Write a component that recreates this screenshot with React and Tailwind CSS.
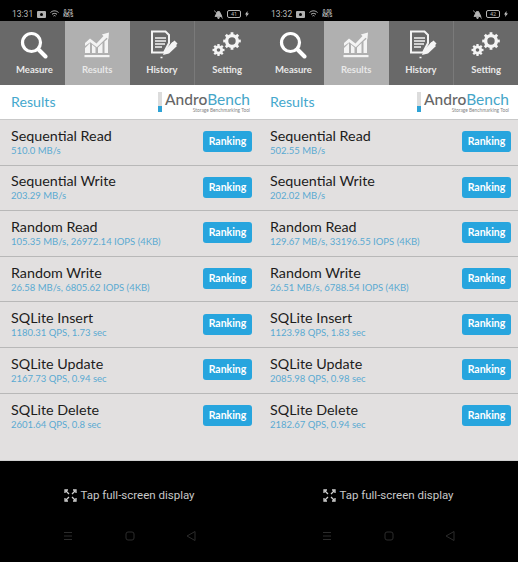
const font = { fontFamily: 'Lato, "Noto Sans", sans-serif' };

const Measure = () => (
  <svg width="28" height="28" viewBox="0 0 28 28" fill="none" stroke="white">
    <circle cx="11.500" cy="11.500" r="9" strokeWidth="3.200" />
    <path d="M18.500 18.500L25.500 25.500" strokeWidth="4" strokeLinecap="round" />
  </svg>
);
const ResultsIcon = () => (
  <svg width="26" height="27" viewBox="0 0 26 27" fill="#f4f4f4">
    <path d="M1 12l5-4.500 6.500 5L19.500 5l-1.700-1.500L25 1.500l-.6 7-1.800-1.700-9.800 9.500-6.500-5L1 15z" />
    <path d="M1 17l5-5v10H1zM8 13.500l3.500 3V22H8zM14 16.500l4.500-4.500V22H14zM20.500 10.500l3.500-3V22h-3.500z" />
    <rect x="0.500" y="24" width="25" height="2.200" />
  </svg>
);
const HistoryIcon = () => (
  <svg width="28" height="29" viewBox="0 0 28 29" fill="none">
    <path d="M2 1.500h13.500L19 5v8l-5 9.500H2z" stroke="#f4f4f4" strokeWidth="2" />
    <path d="M5 8h11M5 11h11M5 14h10M5 17h7" stroke="#f4f4f4" strokeWidth="1.500" />
    <path d="M13 25l2-5 7.500-8 4.500 4-8 7.500z" fill="#f4f4f4" />
    <path d="M21 13.500l3.500-3 3 3-2.500 3z" fill="#f4f4f4" />
    <path d="M10.500 27.500h2" stroke="#f4f4f4" strokeWidth="1.500" />
  </svg>
);
const gear = (cx, cy, r, sw, t, n) => {
  const teeth = [];
  for (let i = 0; i < n; i++) {
    const a = (i * 360) / n;
    teeth.push(<rect key={i} x={cx - t / 2} y={cy - r - sw / 2 - t * 0.6} width={t} height={t} fill="#f4f4f4" transform={`rotate(${a} ${cx} ${cy})`} />);
  }
  return (
    <g>
      <circle cx={cx} cy={cy} r={r} fill="none" stroke="#f4f4f4" strokeWidth={sw} />
      {teeth}
    </g>
  );
};
const GearIcon = () => (
  <svg width="30" height="25" viewBox="0 0 30 25">
    {gear(20, 9, 5.400, 3.400, 2.800, 8)}
    {gear(6.500, 18, 3.200, 2.800, 2.300, 8)}
  </svg>
);

const tabs = [
  { label: 'Measure', icon: <Measure />, cls: 'pl-[4px]' },
  { label: 'Results', icon: <ResultsIcon />, active: true },
  { label: 'History', icon: <HistoryIcon />, iconCls: 'pl-[5px]' },
  { label: 'Setting', icon: <GearIcon /> },
];

const FullScreen = () => (
  <svg width="13" height="13" viewBox="0 0 13 13" fill="none" stroke="#d0d0d0" strokeWidth="1.300">
    <path d="M1 4V1h3M9 1h3v3M12 9v3H9M4 12H1V9M2 2l3 3M11 2L8 5M11 11L8 8M2 11l3-3" />
  </svg>
);

function Panel({ time, speed, battery, results }) {
  return (
    <div className="w-[259px] h-[562px] flex flex-col bg-black" style={font}>
      <div className="h-[21px] flex items-center justify-between pl-[12px] pr-[10px] pt-[7px] text-[#b9b9b9]" style={{ fontFamily: 'Roboto, sans-serif' }}>
        <div className="flex items-center gap-[4px]">
          <span className="text-[8.500px] leading-none">{time}</span>
          <span className="w-[9px] h-[7px] bg-[#b0b0b0] rounded-[1px] flex items-center justify-center">
            <span className="w-[3px] h-[3px] rounded-full bg-black" />
          </span>
          <svg width="9" height="8" viewBox="0 0 9 8" fill="none" stroke="#c0c0c0" strokeWidth="1">
            <path d="M.5 2.500C3 .3 6 .3 8.500 2.500M2 4.300c1.500-1.200 3.500-1.200 5 0M3.500 6c.7-.6 1.300-.6 2 0" />
          </svg>
          <span className="text-[4.500px] leading-[4px] w-[10px] text-center font-bold">{speed}<br />KB/S</span>
        </div>
        <div className="flex items-center gap-[3px]">
          <svg width="11" height="9" viewBox="0 0 11 9" fill="#b5b5b5">
            <path d="M2 6.500L4.500 1.500h2L9 6.500zM4.500 7.500h2L5.500 9zM1 .5l9 8" stroke="#b5b5b5" strokeWidth=".8" />
          </svg>
          <span className="w-[14px] h-[8px] border border-[#b5b5b5] rounded-[2px] text-[5.500px] leading-[6px] text-center">{battery}</span>
          <svg width="4" height="6" viewBox="0 0 4 6" fill="#c5c5c5" className="ml-[1px]">
            <path d="M2.500 0L0 3.400h1.500L1 6l3-3.600H2.400z" />
          </svg>
        </div>
      </div>

      <div className="h-[64px] grid grid-cols-4 bg-[#696969]">
        {tabs.map((t, i) => (
          <div
            key={t.label}
            className={`flex flex-col items-center pt-[9px] ${t.active ? 'bg-[#b0b0b0]' : ''} ${i === 3 ? 'border-l border-[#7a7a7a]' : ''} ${t.cls || ''}`}
          >
            <div className={`h-[29px] flex items-center justify-center ${t.iconCls || ''}`}>{t.icon}</div>
            <span className="text-[9.500px] leading-[12px] mt-[5px] font-bold text-[#e8e8e8]">{t.label}</span>
          </div>
        ))}
      </div>

      <div className="h-[35px] bg-white flex items-center justify-between pl-[11px] pr-[9px] border-b border-[#c9c9c9]">
        <span className="text-[14.200px] text-[#45a8cd]">Results</span>
        <div className="flex items-start gap-[3px] pt-[1px]">
          <div className="w-[4px] h-[20px] flex flex-col justify-end bg-[#dcdcdc]">
            <div className="h-[6px] bg-[#2ea3d6]" />
          </div>
          <div className="flex flex-col items-end">
            <span className="text-[15.500px] leading-[14px] text-[#666] font-medium">
              Andro<span className="text-[#45a5c8] font-normal">Bench</span>
            </span>
            <span className="text-[4.800px] leading-[6px] mt-[1px] text-[#858585]">Storage Benchmarking Tool</span>
          </div>
        </div>
      </div>

      <div className="h-[341px] bg-[#e2e0e0] border-b border-[#cfcfcf] flex flex-col">
        {results.map(([name, value]) => (
          <div key={name} className="h-[45.600px] shrink-0 flex items-center justify-between pl-[11px] pr-[7px] pb-[1px] border-b border-[#b8b8b8] last:border-b-0">
            <div className="flex flex-col">
              <span className="text-[14.300px] leading-[18px] text-[#1c1c1c]">{name}</span>
              <span className="text-[9.500px] leading-[12px] text-[#5aaad2]">{value}</span>
            </div>
            <button className="w-[49px] h-[21px] bg-[#27a5de] rounded-[3px] text-white text-[10.500px] font-bold" style={font}>Ranking</button>
          </div>
        ))}
      </div>

      <div className="flex-1 flex flex-col items-center">
        <div className="flex items-center gap-[3px] mt-[26px]">
          <FullScreen />
          <span className="text-[11.500px] leading-[16px] text-[#c8c8c8]" style={{ fontFamily: 'Roboto, sans-serif' }}>Tap full-screen display</span>
        </div>
        <div className="w-full flex justify-between pl-[63px] pr-[63px] mt-[28px]">
          <svg width="10" height="10" viewBox="0 0 10 10" stroke="#2c2c2c" strokeWidth="1"><path d="M1 1.500h8M1 5h8M1 8.500h8" /></svg>
          <svg width="10" height="10" viewBox="0 0 10 10" fill="none" stroke="#2c2c2c" strokeWidth="1"><rect x="1" y="1" width="8" height="8" rx="2" /></svg>
          <svg width="10" height="10" viewBox="0 0 10 10" fill="none" stroke="#2c2c2c" strokeWidth="1"><path d="M9 .5v9L1 5z" /></svg>
        </div>
      </div>
    </div>
  );
}

const left = [
  ['Sequential Read', '510.0 MB/s'],
  ['Sequential Write', '203.29 MB/s'],
  ['Random Read', '105.35 MB/s, 26972.14 IOPS (4KB)'],
  ['Random Write', '26.58 MB/s, 6805.62 IOPS (4KB)'],
  ['SQLite Insert', '1180.31 QPS, 1.73 sec'],
  ['SQLite Update', '2167.73 QPS, 0.94 sec'],
  ['SQLite Delete', '2601.64 QPS, 0.8 sec'],
];
const right = [
  ['Sequential Read', '502.55 MB/s'],
  ['Sequential Write', '202.02 MB/s'],
  ['Random Read', '129.67 MB/s, 33196.55 IOPS (4KB)'],
  ['Random Write', '26.51 MB/s, 6788.54 IOPS (4KB)'],
  ['SQLite Insert', '1123.98 QPS, 1.83 sec'],
  ['SQLite Update', '2085.98 QPS, 0.98 sec'],
  ['SQLite Delete', '2182.67 QPS, 0.94 sec'],
];

export default function App() {
  return (
    <div className="w-[518px] h-[562px] flex overflow-hidden bg-black">
      <Panel time="13:31" speed="0.25" battery="41" results={left} />
      <Panel time="13:32" speed="0.00" battery="42" results={right} />
    </div>
  );
}
